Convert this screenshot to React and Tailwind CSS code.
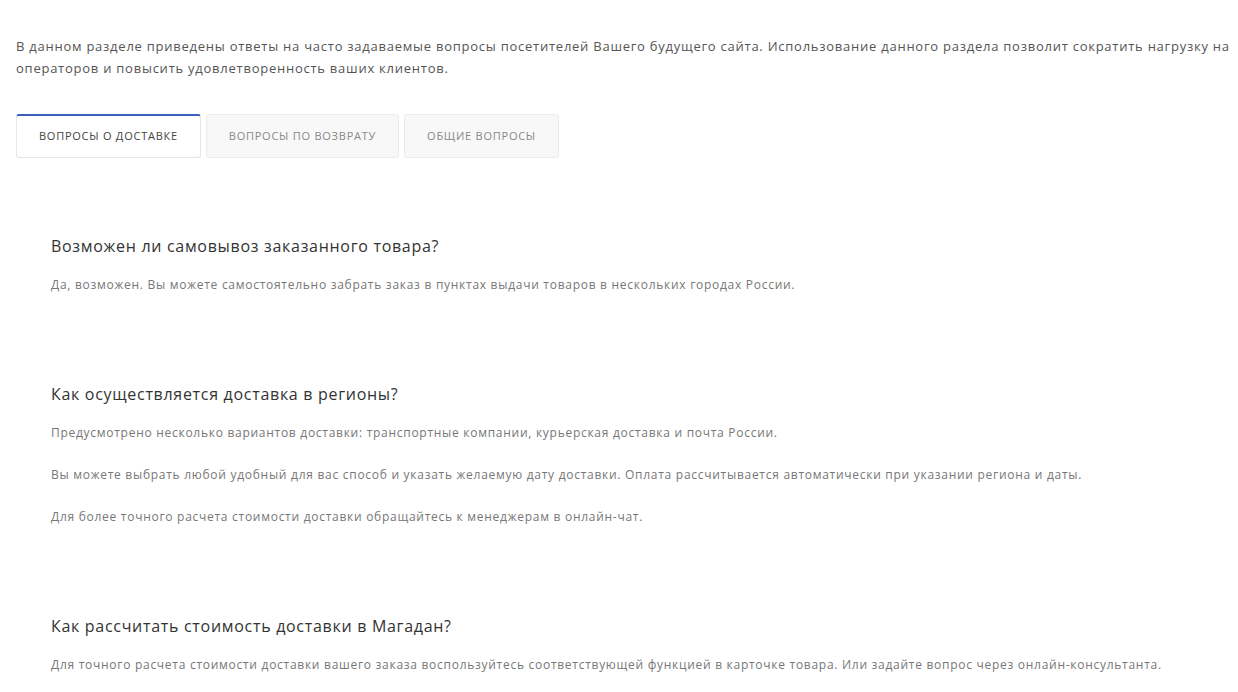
const tabs = ["Вопросы о доставке", "Вопросы по возврату", "Общие вопросы"];

const faq = [
  {
    q: "Возможен ли самовывоз заказанного товара?",
    a: [
      "Да, возможен. Вы можете самостоятельно забрать заказ в пунктах выдачи товаров в нескольких городах России.",
    ],
  },
  {
    q: "Как осуществляется доставка в регионы?",
    a: [
      "Предусмотрено несколько вариантов доставки: транспортные компании, курьерская доставка и почта России.",
      "Вы можете выбрать любой удобный для вас способ и указать желаемую дату доставки. Оплата рассчитывается автоматически при указании региона и даты.",
      "Для более точного расчета стоимости доставки обращайтесь к менеджерам в онлайн-чат.",
    ],
  },
  {
    q: "Как рассчитать стоимость доставки в Магадан?",
    a: [
      "Для точного расчета стоимости доставки вашего заказа воспользуйтесь соответствующей функцией в карточке товара. Или задайте вопрос через онлайн-консультанта.",
    ],
  },
];

const App = () => {
  return (
    <div className="min-h-screen overflow-hidden bg-white pl-4 pr-0 pt-[35px] font-['Open_Sans',sans-serif]">
      <p className="mr-[-14px] text-[13px] leading-[22px] tracking-[0.75px] text-[#555]">
        В данном разделе приведены ответы на часто задаваемые вопросы посетителей Вашего будущего сайта.
        Использование данного раздела позволит сократить нагрузку на операторов и повысить удовлетворенность
        ваших клиентов.
      </p>

      <div className="mt-[35px] flex gap-[5px]">
        {tabs.map((t, i) => (
          <div
            key={t}
            className={
              i === 0
                ? "flex h-[44px] items-center rounded-[3px] border border-[#e6e6e6] border-t-2 border-t-[#3c5fc0] bg-white px-[22px] text-[11px] uppercase tracking-[0.75px] text-[#444]"
                : "flex h-[44px] items-center rounded-[3px] border border-[#ebebeb] bg-[#f8f8f8] px-[22px] text-[11px] uppercase tracking-[0.75px] text-[#888]"
            }
          >
            {t}
          </div>
        ))}
      </div>

      <div className="mt-[76px] flex flex-col gap-[86px] pl-[35px]">
        {faq.map((item) => (
          <div key={item.q}>
            <h3 className="text-[16px] leading-[24px] tracking-[0.7px] text-[#333]">{item.q}</h3>
            <div className="mt-[16px] flex flex-col gap-[20px]">
              {item.a.map((p) => (
                <p key={p} className="text-[12px] leading-[22px] tracking-[0.72px] text-[#777]">
                  {p}
                </p>
              ))}
            </div>
          </div>
        ))}
      </div>
    </div>
  );
};

export default App;
